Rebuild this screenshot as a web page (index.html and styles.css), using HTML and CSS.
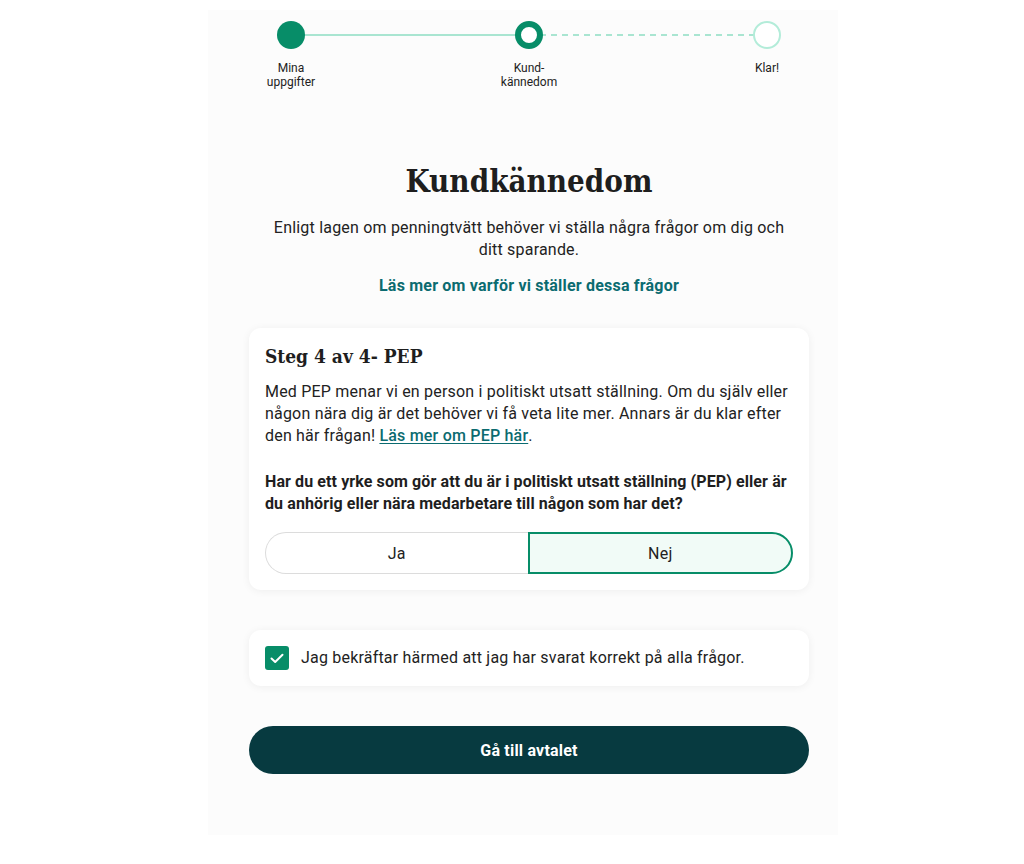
FILE: index.html
```html
<!DOCTYPE html>
<html lang="sv">
<head>
<meta charset="utf-8">
<title>Kundkännedom</title>
<link rel="stylesheet" href="styles.css">
</head>
<body>
<div class="page">
  <div class="content">
    <div class="stepper">
      <div class="track">
        <span class="seg seg-done"></span>
        <span class="seg seg-todo"></span>
      </div>
      <div class="step">
        <span class="dot dot-done"></span>
        <span class="step-label">Mina<br>uppgifter</span>
      </div>
      <div class="step">
        <span class="dot dot-current"></span>
        <span class="step-label">Kund-<br>kännedom</span>
      </div>
      <div class="step">
        <span class="dot dot-todo"></span>
        <span class="step-label">Klar!</span>
      </div>
    </div>

    <h1 class="title">Kundkännedom</h1>
    <p class="intro">Enligt lagen om penningtvätt behöver vi ställa några frågor om dig och ditt sparande.</p>
    <p class="intro-link"><a href="#" class="link-plain">Läs mer om varför vi ställer dessa frågor</a></p>

    <section class="card">
      <h2 class="card-title">Steg 4 av 4- PEP</h2>
      <p class="card-text">Med PEP menar vi en person i politiskt utsatt ställning. Om du själv eller någon nära dig är det behöver vi få veta lite mer. Annars är du klar efter den här frågan! <a href="#" class="link-under">Läs mer om PEP här</a>.</p>
      <p class="question">Har du ett yrke som gör att du är i politiskt utsatt ställning (PEP) eller är du anhörig eller nära medarbetare till någon som har det?</p>
      <div class="toggle">
        <button class="opt opt-left">Ja</button>
        <button class="opt opt-right opt-selected">Nej</button>
      </div>
    </section>

    <label class="confirm">
      <span class="checkbox">
        <svg width="14" height="11" viewBox="0 0 14 11"><path d="M1.5 5.5 L5.2 9 L12.5 1.8" fill="none" stroke="#fff" stroke-width="2" stroke-linecap="round" stroke-linejoin="round"/></svg>
      </span>
      <span class="confirm-text">Jag bekräftar härmed att jag har svarat korrekt på alla frågor.</span>
    </label>

    <button class="primary">Gå till avtalet</button>
  </div>
</div>
</body>
</html>
```
FILE: styles.css
```css
* { box-sizing: border-box; }
html, body { margin: 0; padding: 0; background: #ffffff; }
body {
  font-family: Roboto, "Noto Sans", "Liberation Sans", sans-serif;
  color: #1f1f1f;
  font-size: 16px;
  letter-spacing: 0.2px;
}
.page {
  width: 630px;
  margin: 10px 0 0 208px;
  background: #fcfcfc;
  padding: 11px 29px 61px 41px;
}
.content { width: 560px; }

/* Stepper */
.stepper {
  position: relative;
  display: flex;
  justify-content: space-between;
}
.track {
  position: absolute;
  left: 42px;
  right: 42px;
  top: 13px;
  height: 2px;
  display: flex;
}
.seg { flex: 1; height: 2px; }
.seg-done { background: #a9e5d1; }
.seg-todo {
  background: repeating-linear-gradient(90deg, #a9e5d1 0 6px, transparent 6px 11px);
}
.step {
  width: 84px;
  display: flex;
  flex-direction: column;
  align-items: center;
  position: relative;
}
.dot {
  width: 28px;
  height: 28px;
  border-radius: 50%;
  display: block;
}
.dot-done { background: #078d68; }
.dot-current { background: #fff; border: 6px solid #078d68; }
.dot-todo { background: #fff; border: 2px solid #b3ecd9; }
.step-label {
  margin-top: 12px;
  font-size: 12px;
  line-height: 14px;
  letter-spacing: 0;
  text-align: center;
  color: #222;
}

/* Header */
.title {
  font-family: "DejaVu Serif Condensed", "DejaVu Serif", serif;
  font-weight: bold;
  font-size: 31px;
  line-height: 40px;
  letter-spacing: 0;
  text-align: center;
  margin: 72px 0 16px;
  color: #1e1e1e;
}
.intro {
  max-width: 530px;
  margin: 0 auto;
  text-align: center;
  line-height: 22px;
  color: #222;
}
.intro-link {
  margin: 14px 0 0;
  text-align: center;
  line-height: 22px;
}
.link-plain {
  color: #0b6b70;
  font-weight: bold;
  text-decoration: none;
}

/* Card */
.card {
  margin-top: 31px;
  background: #fff;
  border-radius: 12px;
  box-shadow: 0 1px 8px rgba(0, 0, 0, 0.06);
  padding: 16px;
}
.card-title {
  font-family: "DejaVu Serif Condensed", "DejaVu Serif", serif;
  font-weight: bold;
  font-size: 19px;
  line-height: 24px;
  letter-spacing: 0;
  margin: 0 0 13px;
  color: #1e1e1e;
}
.card-text {
  margin: 0;
  line-height: 22px;
  color: #222;
}
.link-under {
  color: #0b6b70;
  font-weight: 500;
  text-decoration: underline;
  text-underline-offset: 2px;
}
.question {
  margin: 24px 0 0;
  font-weight: bold;
  line-height: 22px;
  letter-spacing: 0.1px;
  color: #1e1e1e;
}
.toggle {
  margin-top: 17px;
  display: flex;
  height: 42px;
}
.opt {
  flex: 1;
  font-family: inherit;
  font-size: 16px;
  letter-spacing: 0.2px;
  color: #222;
  background: #fff;
  border: 1px solid #dcdcdc;
  padding: 0;
}
.opt-left {
  border-radius: 21px 0 0 21px;
  border-right: none;
}
.opt-right { border-radius: 0 21px 21px 0; }
.opt-selected {
  background: #f1fbf7;
  border: 2px solid #078d68;
}

/* Confirm */
.confirm {
  margin-top: 40px;
  display: flex;
  align-items: center;
  gap: 12px;
  background: #fff;
  border-radius: 12px;
  box-shadow: 0 1px 8px rgba(0, 0, 0, 0.06);
  padding: 16px;
}
.checkbox {
  width: 24px;
  height: 24px;
  border-radius: 3px;
  background: #078d68;
  display: flex;
  align-items: center;
  justify-content: center;
  flex: none;
}
.confirm-text {
  line-height: 22px;
  color: #222;
}

/* Primary button */
.primary {
  margin-top: 40px;
  width: 100%;
  height: 48px;
  border: none;
  border-radius: 24px;
  background: #073a40;
  color: #fff;
  font-family: inherit;
  font-size: 16px;
  font-weight: bold;
  letter-spacing: 0.2px;
  display: block;
}
```
